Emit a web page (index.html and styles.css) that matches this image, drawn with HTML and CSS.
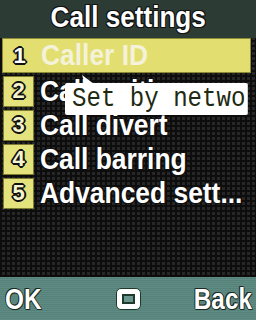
FILE: index.html
```html
<!DOCTYPE html>
<html>
<head>
<meta charset="utf-8">
<link rel="stylesheet" href="styles.css">
</head>
<body>
<div class="screen">
  <header class="title"><span class="title-text">Call settings</span></header>
  <ul class="menu">
    <li class="item selected"><span class="num">1</span><span class="label">Caller ID</span></li>
    <li class="item"><span class="num">2</span><span class="label">Call waiting</span></li>
    <li class="item"><span class="num">3</span><span class="label">Call divert</span></li>
    <li class="item"><span class="num">4</span><span class="label">Call barring</span></li>
    <li class="item"><span class="num">5</span><span class="label">Advanced sett...</span></li>
  </ul>
  <div class="tooltip"><span class="tip-text">Set by network</span></div>
  <footer class="softkeys">
    <span class="key key-left">OK</span>
    <span class="center-key"><span class="center-inner"></span></span>
    <span class="key key-right">Back</span>
  </footer>
</div>
</body>
</html>
```
FILE: styles.css
```css
* { box-sizing: border-box; }
html, body { margin: 0; padding: 0; background: #000; }
.screen {
  position: relative;
  width: 256px;
  height: 320px;
  overflow: hidden;
  display: flex;
  flex-direction: column;
  font-family: "Liberation Sans", Arial, sans-serif;
  font-weight: bold;
  background-color: #272727;
  background-image:
    linear-gradient(90deg, #0d0d0d 2px, transparent 2px),
    linear-gradient(#0d0d0d 2px, transparent 2px);
  background-size: 5px 5px;
}
.title {
  height: 38px;
  flex: none;
  background: #2c3c35;
  color: #fff;
  font-size: 29px;
  line-height: 35px;
  text-align: center;
  text-shadow: -1px 0 #111, 1px 0 #111, 0 -1px #111, 0 1px #111,
    -1px -1px #111, 1px 1px #111, -1px 1px #111, 1px -1px #111;
}
.title-text {
  display: inline-block;
  transform: scaleX(0.9);
  transform-origin: center;
}
.menu {
  list-style: none;
  margin: 0;
  padding: 0;
  flex: 1;
}
.item {
  display: flex;
  align-items: center;
  height: 34px;
  padding-left: 3px;
  color: #fff;
  font-size: 29px;
  text-shadow: -1px 0 #111, 1px 0 #111, 0 -1px #111, 0 1px #111,
    -1px -1px #111, 1px 1px #111, -1px 1px #111, 1px -1px #111;
}
.item.selected {
  height: 35px;
  margin: 0 5px 1px 2px;
  padding-left: 1px;
  background: #e2de70;
  border: 1px solid #8c8a34;
  color: #f4f2d8;
  text-shadow: none;
}
.num {
  flex: none;
  width: 31px;
  height: 31px;
  margin-right: 6px;
  display: flex;
  align-items: center;
  justify-content: center;
  background: #e4e27c;
  border: 1px solid #7d7b30;
  color: #f6f4cc;
  font-size: 22px;
  text-shadow: -2px 0 #111, 2px 0 #111, 0 -2px #111, 0 2px #111,
    -1px -1px #111, 1px 1px #111, -1px 1px #111, 1px -1px #111;
}
.selected .num {
  background: transparent;
  border: none;
  color: #fff;
}
.label {
  display: inline-block;
  white-space: nowrap;
  transform: scaleX(0.91);
  transform-origin: left center;
}
.tooltip {
  position: absolute;
  left: 65px;
  top: 83px;
  width: 183px;
  height: 32px;
  background: #fff;
  border-right: 1px solid #cfcfcf;
  border-radius: 2px;
  padding-left: 7px;
  overflow: hidden;
}
.screen::after {
  content: "";
  position: absolute;
  left: 82px;
  top: 75px;
  width: 12px;
  height: 9px;
  background: #fff;
  clip-path: polygon(0 0, 100% 100%, 25% 100%);
}
.tip-text {
  display: block;
  white-space: nowrap;
  font-family: "Liberation Mono", monospace;
  font-weight: normal;
  font-size: 28px;
  line-height: 31px;
  color: #1e2a12;
  transform: scaleX(0.86);
  transform-origin: left center;
}
.softkeys {
  flex: none;
  height: 43px;
  display: grid;
  grid-template-columns: 1fr auto 1fr;
  align-items: center;
  padding: 0 4px 0 5px;
  background-color: #5b8880;
  background-image: repeating-linear-gradient(#5e8b83 0 1px, #56827a 1px 2px);
}
.key {
  display: block;
  color: #fff;
  font-size: 29px;
  line-height: 30px;
  text-shadow: -1px 0 #1a2a22, 1px 0 #1a2a22, 0 -1px #1a2a22, 0 1px #1a2a22,
    -1px -1px #1a2a22, 1px 1px #1a2a22;
  transform: scaleX(0.84);
  white-space: nowrap;
}
.key-left { transform-origin: left center; }
.key-right { transform-origin: right center; text-align: right; }
.center-key {
  width: 25px;
  height: 22px;
  background: #fff;
  border: 1px solid #1d3a2a;
  border-radius: 5px;
  display: flex;
  align-items: center;
  justify-content: center;
}
.center-inner {
  width: 13px;
  height: 10px;
  border: 2px solid #1d3a2a;
  background: #6a968d;
}
```
